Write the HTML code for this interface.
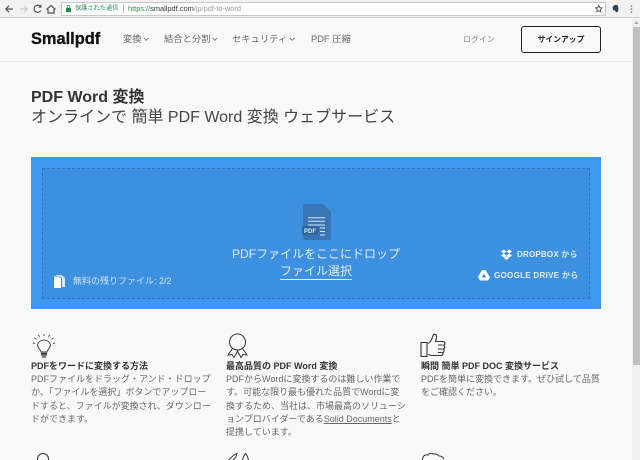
<!DOCTYPE html>
<html lang="ja"><head><meta charset="utf-8"><title>Smallpdf</title>
<style>
html,body{margin:0;padding:0;width:640px;height:460px;overflow:hidden;background:#f9f9f9}
body{position:relative;font-family:"Liberation Sans","Noto Sans CJK JP",sans-serif;color:#555}
.a{position:absolute;white-space:nowrap}
svg{position:absolute;overflow:visible}
.h{font-size:9px;font-weight:bold;color:#333;line-height:13px}
.p{font-size:9px;color:#666;line-height:13.3px}
.n{font-size:9.3px;color:#666;line-height:13px;top:33px}
</style></head><body>
<!-- browser chrome -->
<div class="a" style="left:0;top:0;width:640px;height:17px;background:#f2f2f2;border-bottom:1px solid #cfcfcf"></div>
<div class="a" style="left:61px;top:2px;width:543px;height:12px;background:#fff;border:1px solid #c8c8c8"></div>
<svg style="left:0;top:0" width="60" height="17" fill="none" stroke="#555" stroke-width="1.200">
<path d="M13 9H6M9 5.800L5.800 9 9 12.200"/><path d="M20 9h7M24 5.800L27.200 9 24 12.200" stroke="#ccc"/>
<path d="M40.500 6.500A3.600 3.600 0 1 0 40.800 10.500M40.800 4.800V7.200H38.500"/><path d="M46.500 9.500L51 5.500l4.500 4M48 9v4h6V9"/></svg>
<svg style="left:66px;top:5px" width="5" height="7"><path d="M0 3h5v4H0z" fill="#1a8a4b"/><path d="M1.200 3V1.800a1.300 1.300 0 0 1 2.600 0V3" fill="none" stroke="#1a8a4b" stroke-width=".8"/></svg>
<div class="a" style="left:75px;top:3px;font-size:6.200px;line-height:11px;color:#2f8a5c">保護された通信</div>
<div class="a" style="left:123px;top:4px;width:1px;height:9px;background:#bbb"></div>
<div class="a" style="left:128px;top:3px;font-size:7.400px;line-height:11px;color:#999"><span style="color:#2f8a5c">https://</span><span style="color:#333">smallpdf.com</span>/jp/pdf-to-word</div>
<svg style="left:595px;top:5px" width="8" height="8"><path d="M3.800.5l1 2.100 2.300.3-1.700 1.600.4 2.300-2-1.100-2 1.100.4-2.300L.5 2.900l2.300-.3z" fill="none" stroke="#555" stroke-width=".9"/></svg>
<svg style="left:612px;top:4px" width="8" height="9"><path d="M.5 3l2-2h3l1 3-.5 3.500-2 1-1-2-2-.5z" fill="#33424d"/></svg>
<svg style="left:630px;top:5px" width="3" height="10" fill="#666"><circle cx="1.500" cy="1" r=".8"/><circle cx="1.500" cy="4" r=".8"/><circle cx="1.500" cy="7" r=".8"/></svg>
<!-- scrollbar -->
<div class="a" style="left:632px;top:18px;width:8px;height:442px;background:#f0f0f0"></div>
<div class="a" style="left:633px;top:27px;width:7px;height:338px;background:#c0c0c0"></div>
<svg style="left:634px;top:21px" width="5" height="4"><path d="M2.500 0L5 3H0z" fill="#aaa"/></svg>
<!-- nav -->
<div class="a" style="left:0;top:61px;width:632px;height:1px;background:#e8e8e8"></div>
<div class="a" style="left:31px;top:29px;font-size:16.400px;font-weight:bold;line-height:20px;color:#111;-webkit-text-stroke:.3px #111">Smallpdf</div>
<div class="a n" style="left:123px">変換</div>
<div class="a n" style="left:164px">結合と分割</div>
<div class="a n" style="left:232px">セキュリティ</div>
<div class="a n" style="left:311px">PDF 圧縮</div>
<svg style="left:0;top:0" width="300" height="50" fill="none" stroke="#777" stroke-width=".9"><path d="M144 38l2.300 2.300 2.300-2.300M212.500 38l2.300 2.300 2.300-2.300M290 38l2.300 2.300 2.300-2.300"/></svg>
<div class="a" style="left:463px;top:33px;font-size:8px;line-height:13px;color:#888">ログイン</div>
<div class="a" style="left:521px;top:26px;width:78px;height:25px;border:1px solid #222;border-radius:3px;text-align:center;font-size:7.800px;font-weight:bold;line-height:25px;color:#222">サインアップ</div>
<!-- title -->
<div class="a" style="left:31px;top:88px;font-size:16px;font-weight:bold;line-height:20px;color:#333">PDF Word 変換</div>
<div class="a" style="left:31px;top:107px;font-size:16px;line-height:21px;color:#444">オンラインで 簡単 PDF Word 変換 ウェブサービス</div>
<!-- dropzone -->
<div class="a" style="left:31px;top:157px;width:570px;height:152px;background:#3f98f0"></div>
<div class="a" style="left:42px;top:168px;width:546px;height:129px;background:#3d8fe0;border:1px dashed #2f75b8"></div>
<svg style="left:303px;top:204px" width="28" height="36"><path d="M2 0h18l8 8v26a2 2 0 0 1-2 2H2a2 2 0 0 1-2-2V2a2 2 0 0 1 2-2z" fill="#3a75b5"/><path d="M5 13.800h17M5 17.300h17M5 21h17" stroke="#dbe8f5"/><path d="M17 24h5M17 27.500h5M17 31h5" stroke="#dbe8f5"/><rect x="-1" y="22" width="16" height="9" rx="2" fill="#2f6399"/><text x="7" y="29" text-anchor="middle" font-size="6" font-weight="bold" fill="#dbe8f5" font-family="Liberation Sans">PDF</text></svg>
<div class="a" style="left:232px;top:246px;font-size:12px;line-height:17px;color:#e4eefa">PDFファイルをここにドロップ</div>
<div class="a" style="left:280px;top:264px;font-size:12px;line-height:15px;color:#e4eefa;border-bottom:1px solid #e4eefa">ファイル選択</div>
<svg style="left:53px;top:274px" width="13" height="14" fill="#fff"><path d="M1 2.500h5l2 2v9.500H1z"/><path d="M3.500 1h5l3.500 3v9h-3V4L6.500 2H3.500z" fill="#dbe8f5"/></svg>
<div class="a" style="left:73px;top:275px;font-size:9px;line-height:13px;color:#d5e5f7">無料の残りファイル: 2/2</div>
<svg style="left:501px;top:249px" width="11" height="11" fill="#fff"><path d="M0 2.500L2.800.5l2.700 2-2.800 2zM5.500 2.500l2.700-2 2.800 2-2.800 2zM0 6.500l2.700-2 2.800 2-2.800 2zM5.500 6.500l2.700-2 2.800 2-2.800 2zM2.800 9L5.500 7l2.700 2-2.700 2z"/></svg>
<div class="a" style="left:517px;top:248px;font-size:8px;font-weight:bold;line-height:13px;color:#e4eefa;letter-spacing:.2px">DROPBOX から</div>
<svg style="left:478px;top:270px" width="12" height="11" fill="#fff"><path d="M4 0h3.500L12 7.500 10 10.500H2L0 7zM5.800 3.500L3.800 7.500h4.200z" fill-rule="evenodd"/></svg>
<div class="a" style="left:494px;top:269px;font-size:8px;font-weight:bold;line-height:13px;color:#e4eefa;letter-spacing:.3px">GOOGLE DRIVE から</div>
<!-- feature icons -->
<svg style="left:33px;top:334px" width="22" height="24" fill="none" stroke="#333" stroke-width=".9"><path d="M8 18c0-2.500-3.500-3.500-3.500-7.500a7 7 0 0 1 13 0c0 4-3.500 5-3.500 7.500z"/><path d="M8 19.500h6M8 21h6M9 23h4" stroke-width="1.300"/><path d="M11 0v2M5.500 1l1 1.800M16.500 1l-1 1.800M1.500 4l2 1.200M20.500 4l-2 1.200M0 9l2 .3M22 9l-2 .3"/></svg>
<svg style="left:228px;top:334px" width="19" height="23" fill="none" stroke="#333" stroke-width="1"><circle cx="9.500" cy="8" r="8"/><path d="M4.500 14.500L0 21l4-.5 2 3 3.500-6.500 3.500 6.500 2-3 4 .5-4.500-6.500"/></svg>
<svg style="left:421px;top:334px" width="24" height="23" fill="none" stroke="#333" stroke-width="1.100"><path d="M0 8.500h6v14H0z"/><path d="M7 9.500c3-1.500 4-4.500 5-8 .5-2 3.500-1.500 3.500.5 0 2-.5 3.500-1 5.500h7.500c2.500 0 2.500 3.500.3 3.800 2 .5 2 3.500-.3 3.700 1.700.7 1.300 3.300-.5 3.500 1 1 .3 3-1.500 3H11c-1.500 0-2.500-.7-4-1M17 11h4.500M17 15h4.500M17 18.500h3.500"/></svg>
<svg style="left:37px;top:453px" width="12" height="10" fill="none" stroke="#333"><circle cx="6" cy="6" r="5.500"/></svg>
<svg style="left:227px;top:453px" width="24" height="10" fill="none" stroke="#333"><path d="M1 7.500l6-5.500 3-1.500-1 3.500-5 5.500M15.500 9c0-3 .7-6 3-8.500C20.800 3 21.500 6 21.500 9"/></svg>
<svg style="left:422px;top:453px" width="23" height="10" fill="none" stroke="#333"><path d="M.5 10C0 4 2 1 6 2c1-2 4-2 5-1 2-.5 5 .5 6 2 2 0 4 1 5 3"/></svg>
<!-- feature text -->
<div class="a h" style="left:31px;top:360px">PDFをワードに変換する方法</div>
<div class="a p" style="left:31px;top:373px">PDFファイルをドラッグ・アンド・ドロップ<br>か、「ファイルを選択」ボタンでアップロー<br>ドすると、ファイルが変換され、ダウンロー<br>ドができます。</div>
<div class="a h" style="left:226px;top:360px">最高品質の PDF Word 変換</div>
<div class="a p" style="left:226px;top:373px">PDFからWordに変換するのは難しい作業で<br>す。可能な限り最も優れた品質でWordに変<br>換するため、当社は、市場最高のソリューシ<br>ョンプロバイダーである<span style="text-decoration:underline">Solid Documents</span>と<br>提携しています。</div>
<div class="a h" style="left:421px;top:360px">瞬間 簡単 PDF DOC 変換サービス</div>
<div class="a p" style="left:421px;top:373px">PDFを簡単に変換できます。ぜひ試して品質<br>をご確認ください。</div>
</body></html>
